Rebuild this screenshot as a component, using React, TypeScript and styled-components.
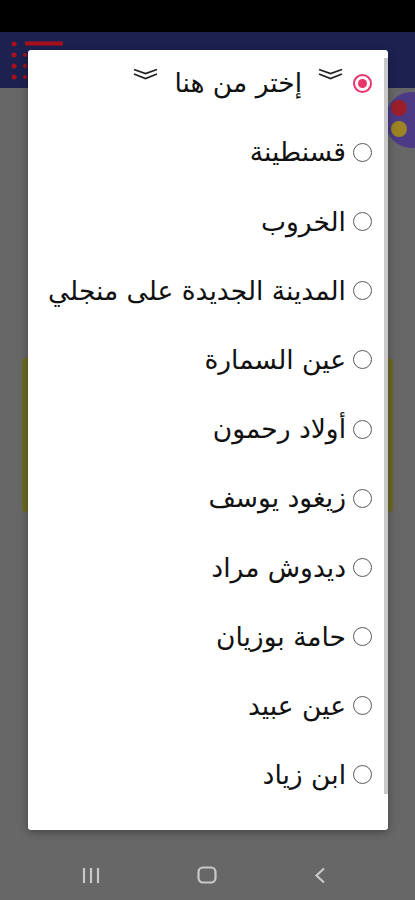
import React, { useState } from 'react';
import styled, { createGlobalStyle } from 'styled-components';

const GlobalStyle = createGlobalStyle`
  html, body {
    margin: 0;
    padding: 0;
    background: #676767;
  }
  * {
    box-sizing: border-box;
  }
`;

const Screen = styled.div`
  position: relative;
  width: 415px;
  height: 900px;
  overflow: hidden;
  display: flex;
  flex-direction: column;
  background: #676767;
  font-family: "DejaVu Sans", "Noto Sans", sans-serif;
`;

const StatusBar = styled.div`
  height: 32px;
  background: #000;
`;

const Header = styled.div`
  height: 56px;
  background: #1d2150;
  padding: 8px 0 0 10px;
`;

const Content = styled.div`
  position: relative;
  flex: 1;
  padding-top: 270px;
`;

const Card = styled.div`
  margin: 0 22px;
  height: 154px;
  background: #6c6a22;
  border-radius: 4px;
`;

const Bubble = styled.div`
  position: absolute;
  top: 4px;
  right: -22px;
  width: 52px;
  height: 56px;
  border-radius: 50%;
  background: #4b3a86;
`;

const Avatar = styled.div<{ $color: string; $top: number }>`
  position: absolute;
  left: 6px;
  top: ${(p) => p.$top}px;
  width: 16px;
  height: 16px;
  border-radius: 50%;
  background: ${(p) => p.$color};
`;

const NavBar = styled.div`
  height: 50px;
  display: flex;
  align-items: center;
  gap: 97px;
  padding-left: 82px;
`;

const NavIcon = styled.svg`
  display: block;
`;

const Dialog = styled.div`
  position: absolute;
  left: 28px;
  top: 50px;
  width: 360px;
  height: 780px;
  background: #fff;
  border-radius: 3px;
  box-shadow: 0 2px 8px rgba(0, 0, 0, 0.35);
  overflow: hidden;
`;

const ScrollThumb = styled.div`
  position: absolute;
  right: 0;
  top: 8px;
  bottom: 36px;
  width: 4px;
  background: #c8c8c8;
`;

const List = styled.ul`
  list-style: none;
  margin: 0;
  padding: 0;
  direction: rtl;
`;

const Row = styled.li`
  height: 69.2px;
  display: flex;
  align-items: center;
  padding-right: 16px;
  margin-top: -1.5px;
  cursor: pointer;
  &:not(:first-child) {
    margin-top: 0;
  }
`;

const Radio = styled.span<{ $checked: boolean }>`
  flex: none;
  position: relative;
  width: 19px;
  height: 19px;
  border-radius: 50%;
  border: ${(p) => (p.$checked ? '2px solid #e9336b' : '1.5px solid #5a5a5a')};
  &:after {
    content: '';
    display: ${(p) => (p.$checked ? 'block' : 'none')};
    position: absolute;
    left: 50%;
    top: 50%;
    width: 9px;
    height: 9px;
    margin: -4.5px 0 0 -4.5px;
    border-radius: 50%;
    background: #e9336b;
  }
`;

const Label = styled.span`
  margin-right: 7px;
  font-size: 26.5px;
  line-height: 1.2;
  color: #111;
  white-space: nowrap;
`;

const PromptLabel = styled(Label)`
  display: flex;
  align-items: center;
  gap: 16px;
  margin-right: 10px;
`;

const Chevrons = styled.svg`
  flex: none;
  margin-top: -18px;
`;

const cities = [
  'قسنطينة',
  'الخروب',
  'المدينة الجديدة على منجلي',
  'عين السمارة',
  'أولاد رحمون',
  'زيغود يوسف',
  'ديدوش مراد',
  'حامة بوزيان',
  'عين عبيد',
  'ابن زياد',
];

const DoubleDown = () => (
  <Chevrons width="25" height="12" viewBox="0 0 25 12">
    <path d="M1 1.5 L12.5 5.5 L24 1.5" fill="none" stroke="#222" strokeWidth="1.8" />
    <path d="M1 6 L12.5 10.5 L24 6" fill="none" stroke="#222" strokeWidth="1.8" />
  </Chevrons>
);

const App: React.FC = () => {
  const [selected, setSelected] = useState(-1);

  return (
    <Screen>
      <GlobalStyle />
      <StatusBar />
      <Header>
        {/* logo */}
        <svg width="60" height="42" viewBox="0 0 60 42">
          <g fill="#a8101c">
            <circle cx="4" cy="4" r="2.5" />
            <circle cx="4" cy="15" r="2.5" />
            <circle cx="4" cy="26" r="2.5" />
            <circle cx="4" cy="37" r="2.5" />
            <circle cx="15" cy="15" r="2" />
            <circle cx="15" cy="26" r="2" />
            <circle cx="15" cy="37" r="2" />
            <rect x="15" y="1.5" width="38" height="4" rx="1" />
          </g>
        </svg>
      </Header>
      <Content>
        <Bubble>
          <Avatar $color="#9a1f2a" $top={8} />
          <Avatar $color="#9c8424" $top={29} />
        </Bubble>
        <Card />
      </Content>
      <NavBar>
        <NavIcon width="18" height="17" viewBox="0 0 18 17">
          <g stroke="#c9c9c9" strokeWidth="2.2">
            <line x1="2" y1="1" x2="2" y2="16" />
            <line x1="9" y1="1" x2="9" y2="16" />
            <line x1="16" y1="1" x2="16" y2="16" />
          </g>
        </NavIcon>
        <NavIcon width="20" height="18" viewBox="0 0 20 18">
          <rect x="1.5" y="1.5" width="17" height="15" rx="4.5" fill="none" stroke="#c9c9c9" strokeWidth="2.2" />
        </NavIcon>
        <NavIcon width="12" height="17" viewBox="0 0 12 17">
          <path d="M10 1.5 L2.5 8.5 L10 15.5" fill="none" stroke="#c9c9c9" strokeWidth="2.2" />
        </NavIcon>
      </NavBar>

      <Dialog>
        <ScrollThumb />
        <List>
          <Row onClick={() => setSelected(-1)}>
            <Radio $checked={selected === -1} />
            <PromptLabel>
              <DoubleDown />
              <span>إختر من هنا</span>
              <DoubleDown />
            </PromptLabel>
          </Row>
          {cities.map((c, i) => (
            <Row key={i} onClick={() => setSelected(i)}>
              <Radio $checked={selected === i} />
              <Label>{c}</Label>
            </Row>
          ))}
        </List>
      </Dialog>
    </Screen>
  );
};

export default App;
